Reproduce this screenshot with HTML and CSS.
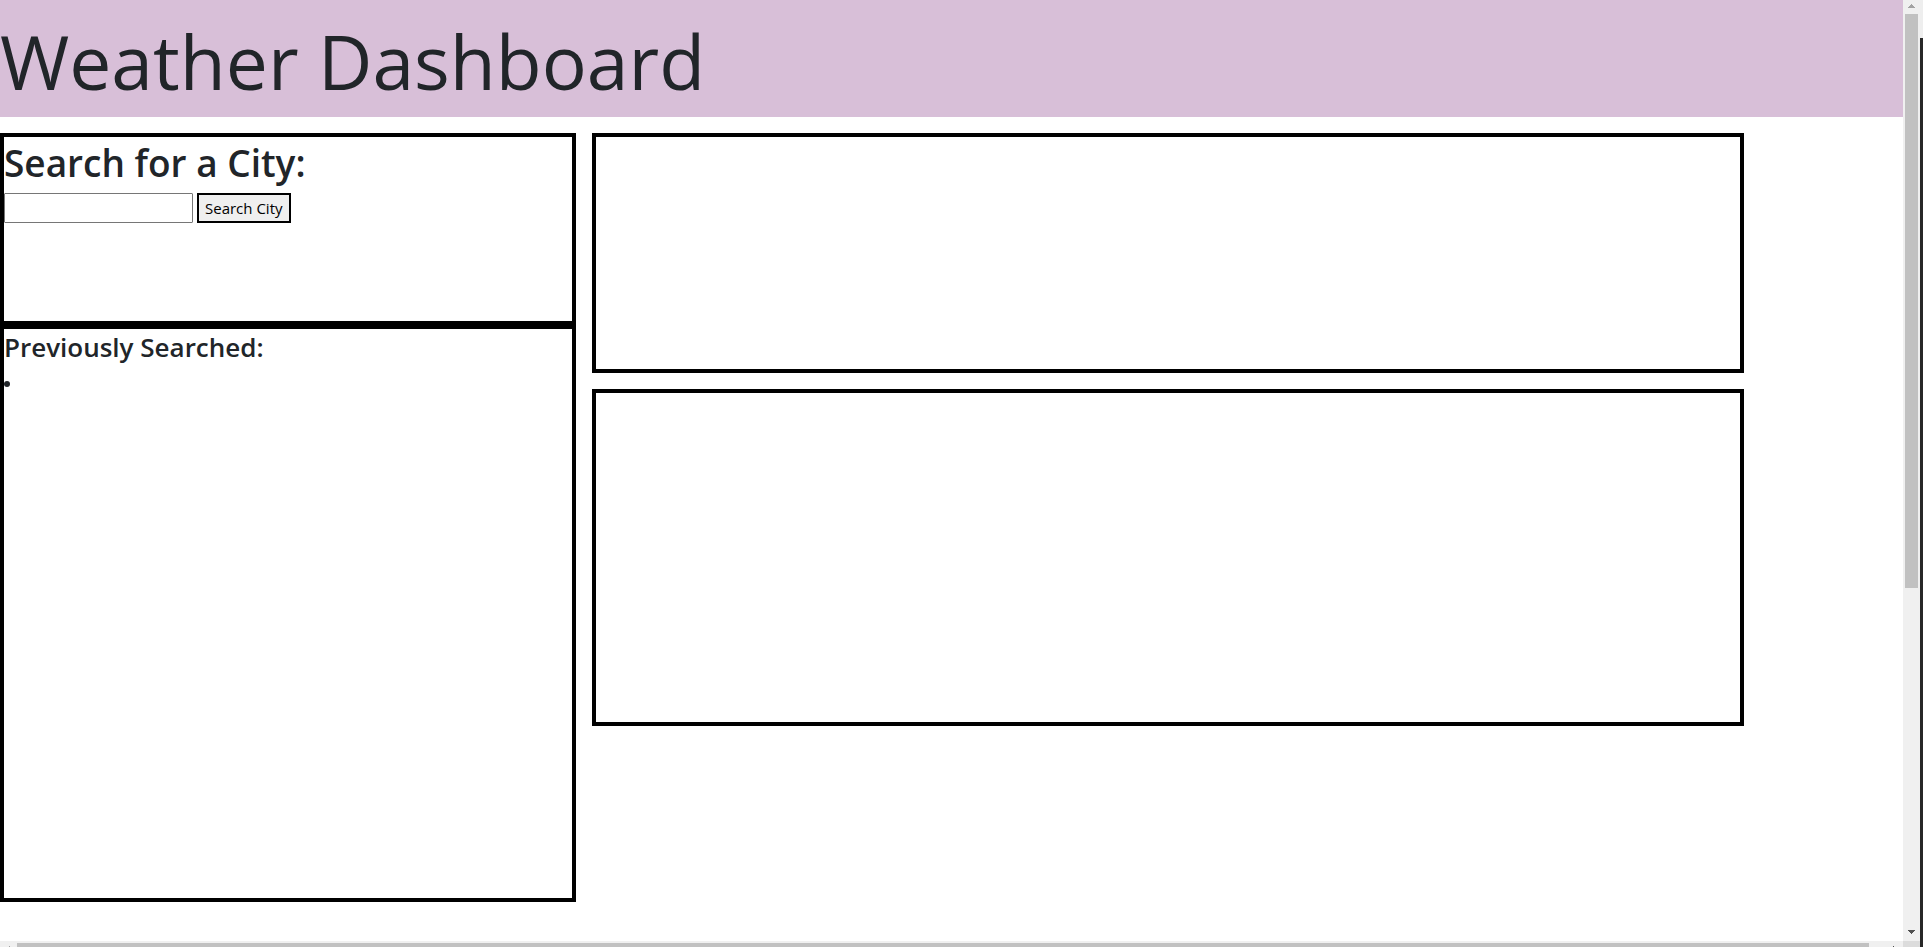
FILE: index.html
```html
<!DOCTYPE html>
<html lang="en">
<head>
<meta charset="utf-8">
<title>Weather Dashboard</title>
<link rel="stylesheet" href="styles.css">
</head>
<body>
<div class="window">
  <div class="page">
    <header class="header"><h1 class="title">Weather Dashboard</h1></header>
    <main class="dashboard">
      <aside class="sidebar">
        <section class="panel search">
          <h2 class="search-title"><label for="city">Search for a City:</label></h2>
          <form class="search-form">
            <input class="city-input" id="city" type="text">
            <button class="search-button" type="button">Search City</button>
          </form>
        </section>
        <section class="panel history">
          <h3 class="history-title">Previously Searched:</h3>
          <ul class="history-list"><li></li></ul>
        </section>
      </aside>
      <div class="forecast">
        <section class="panel current"></section>
        <section class="panel five-day"></section>
      </div>
    </main>
  </div>
  <div class="scroll-y">
    <svg class="arrow" viewBox="0 0 17 14" fill="#a3a3a3" shape-rendering="crispEdges"><path d="M8 4h1v1h1v1h1v1h1v1H5V7h1V6h1V5h1z"/></svg>
    <div class="thumb-y"></div>
    <div class="track-y"></div>
    <svg class="arrow" viewBox="0 0 17 14" fill="#505050" shape-rendering="crispEdges"><path d="M5 3h7v1h-1v1h-1v1H9v1H8V6H7V5H6V4H5z"/></svg>
  </div>
  <div class="edge"></div>
  <div class="scroll-x">
    <svg class="arrow-x" viewBox="0 0 17 6" fill="#a3a3a3" shape-rendering="crispEdges"><path d="M9 5h1v1H9z"/></svg>
    <div class="thumb-x"></div>
    <svg class="arrow-end" viewBox="0 0 34 6" fill="#505050" shape-rendering="crispEdges"><path d="M24 5h1v1h-1z"/></svg>
  </div>
  <div class="corner"></div>
</div>
</body>
</html>
```
FILE: styles.css
```css
* { box-sizing: border-box; }

body {
  margin: 0;
  overflow: hidden;
  background: #fff;
  color: #212529;
  font-family: "Open Sans", "Noto Sans", sans-serif;
  font-size: 16px;
  line-height: 24px;
}

h1, h2, h3, ul { margin: 0; padding: 0; }

.window {
  display: grid;
  grid-template-columns: minmax(0, 1fr) 17px 3px;
  grid-template-rows: minmax(0, 1fr) 6px;
  height: 100vh;
}

.page { overflow: hidden; }

.header {
  padding: 13px 0 8px;
  background: #d8bfd8;
}

.title {
  font-size: 75px;
  font-weight: 400;
  line-height: 96px;
}

.dashboard {
  display: flex;
  gap: 16px;
  padding-top: 16px;
}

.sidebar { width: calc((100vw - 3px) * 0.3); }

.forecast {
  display: flex;
  flex-direction: column;
  gap: 16px;
  width: calc((100vw - 3px) * 0.6);
}

.panel { border: 4px solid #000; }
.search { min-height: 192px; }
.history { min-height: 577px; }
.current { min-height: 240px; }
.five-day { min-height: 337px; }

.search-title {
  padding: 2px 0 6px;
  font-size: 37px;
  font-weight: 600;
  line-height: 48px;
}

.search-form {
  display: flex;
  gap: 4px;
}

.city-input {
  width: 189px;
  height: 30px;
  padding: 1px 2px;
  border: 1px solid #767676;
  border-radius: 1px;
  background: #fff;
  font: inherit;
}

.search-button {
  height: 30px;
  padding: 0 6px;
  border: 2px solid #000;
  background: #efefef;
  color: #000;
  font: inherit;
  font-size: 15px;
}

.history-title {
  padding: 1px 0 7px;
  font-size: 26px;
  font-weight: 600;
  line-height: 34px;
}

.history-list { list-style: none; }

.history-list li::before {
  content: "";
  display: block;
  width: 6px;
  height: 6px;
  margin-top: 10px;
  border-radius: 50%;
  background: #212529;
}

.scroll-y {
  display: flex;
  flex-direction: column;
  background: #f0f0f0;
}

.arrow { height: 14px; flex: none; }

.thumb-y {
  flex: 574;
  margin: 0 2px;
  background: #c1c1c1;
}

.track-y { flex: 339; }

.edge {
  grid-row: span 2;
  background: linear-gradient(#eee 38px, #282828 38px);
}

.scroll-x {
  display: flex;
  background: #f0f0f0;
}

.arrow-x { width: 17px; height: 6px; }

.thumb-x {
  flex: 1;
  margin-top: 2px;
  background: #c1c1c1;
}

.arrow-end { width: 34px; height: 6px; }

.corner { background: #dcdcdc; }
```
